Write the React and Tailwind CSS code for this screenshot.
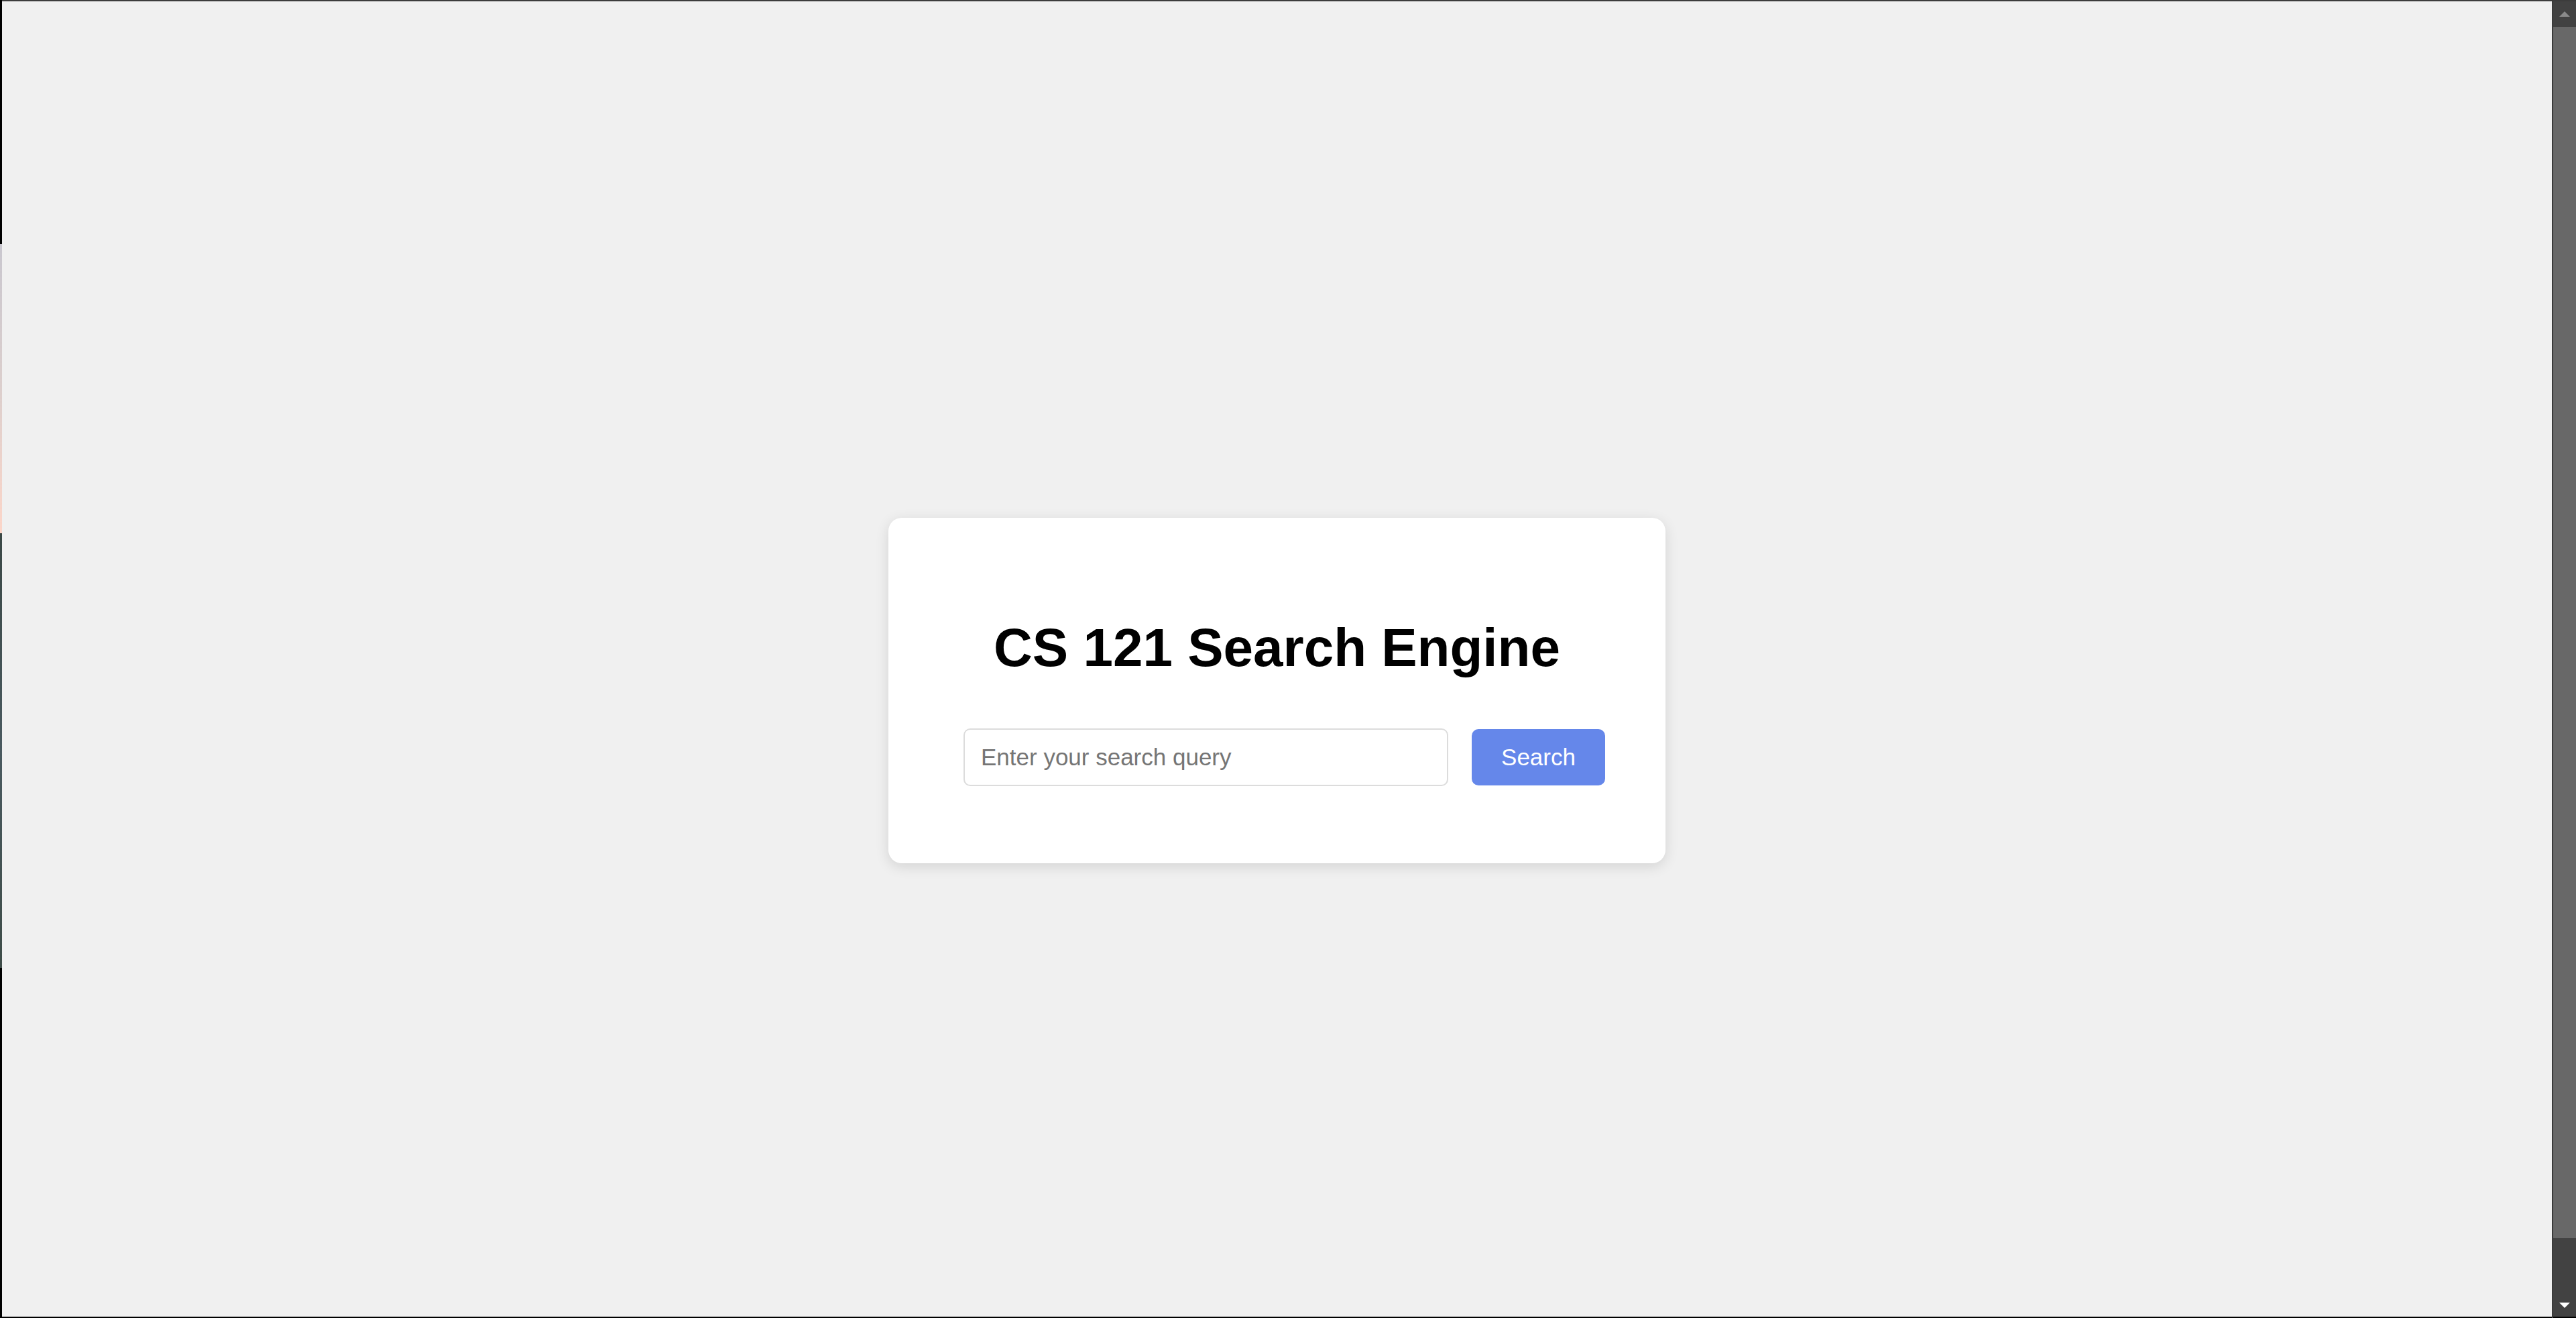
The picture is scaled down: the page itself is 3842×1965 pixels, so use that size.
import React from "react";

export default function App() {
  return (
    <div className="w-[3842px] h-[1965px] flex flex-row overflow-hidden bg-black" style={{ fontFamily: '"Liberation Sans", Arial, sans-serif' }}>
      {/* left window edge strip */}
      <div className="w-[3px] h-full flex flex-col shrink-0">
        <div className="h-[364px] bg-black" />
        <div className="h-[431px] bg-gradient-to-b from-[#c9c7cf] via-[#dccfcd] to-[#fcd6c9]" />
        <div className="h-[648px] bg-gradient-to-b from-[#3b4846] via-[#4a5a60] to-[#3e4c48]" />
        <div className="flex-1 bg-black" />
      </div>

      {/* main viewport */}
      <div className="flex-1 flex flex-col">
        <div className="h-[2px] bg-[#3c3c3c]" />
        <div className="flex-1 bg-[#f0f0f0] flex justify-center pt-[770px]">
          <div className="w-[1159px] h-[515px] bg-white rounded-[20px] shadow-[0_5px_20px_rgba(0,0,0,0.12)] flex flex-col items-center pt-[148px]">
            <h1 className="text-[80px] leading-[92px] font-bold text-black m-0">CS 121 Search Engine</h1>
            <div className="mt-[74px] self-start ml-[112px] flex flex-row items-center gap-[35px]">
              <input
                type="text"
                placeholder="Enter your search query"
                className="w-[723px] h-[86px] border-2 border-[#dcdcdc] rounded-[10px] pl-[24px] text-[35px] text-black placeholder:text-[#757575] bg-white outline-none"
                style={{ fontFamily: '"Liberation Sans", Arial, sans-serif' }}
              />
              <button
                className="w-[199px] h-[84px] bg-[#6587ea] text-white text-[35px] rounded-[10px] flex items-center justify-center"
                style={{ fontFamily: '"Liberation Sans", Arial, sans-serif' }}
              >
                Search
              </button>
            </div>
          </div>
        </div>
        <div className="h-[2px] bg-black" />
      </div>

      {/* scrollbar */}
      <div className="w-[36px] h-full flex flex-row shrink-0">
        <div className="w-[2px] h-full bg-[#3a3a3a]" />
        <div className="flex-1 flex flex-col bg-[#424242]">
          <div className="h-[2px] bg-[#3c3c3c]" />
          <div className="h-[38px] flex items-center justify-center">
            <svg width="18" height="10" viewBox="0 0 18 10"><polygon points="9,1 17,9 1,9" fill="#8a8a8a" /></svg>
          </div>
          <div className="h-[1806px] bg-[#686868]" />
          <div className="flex-1 flex items-end justify-center pb-[12px]">
            <svg width="18" height="10" viewBox="0 0 18 10"><polygon points="1,1 17,1 9,9" fill="#ffffff" /></svg>
          </div>
          <div className="h-[2px] bg-black" />
        </div>
      </div>
    </div>
  );
}
